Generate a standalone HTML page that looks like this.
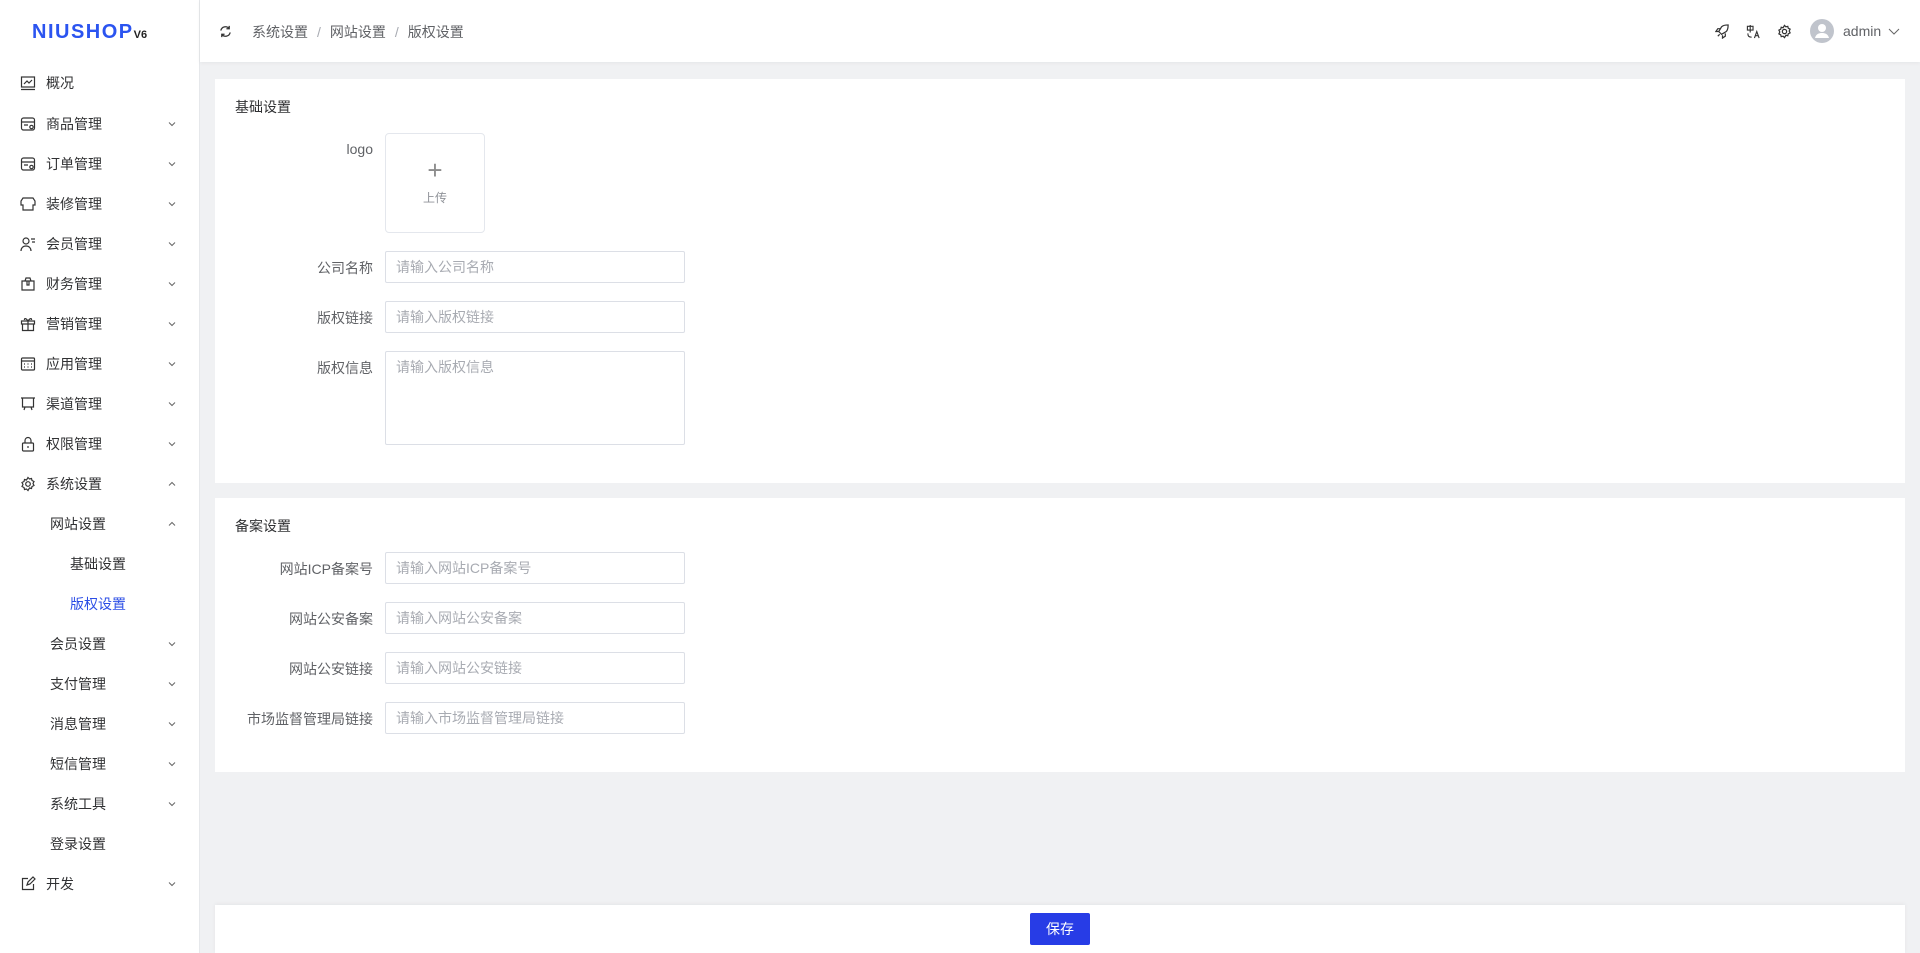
<!DOCTYPE html>
<html><head><meta charset="utf-8"><style>
*{margin:0;padding:0;box-sizing:border-box}
body{width:1920px;height:953px;background:#f0f1f3;font-family:"Liberation Sans","Noto Sans CJK SC",sans-serif;font-size:14px;color:#303133;position:relative;overflow:hidden}
.abs{position:absolute}
#side{left:0;top:0;width:200px;height:953px;background:#fff;border-right:1px solid #e6e8eb}
.logo{left:32px;top:21px;font-family:"Liberation Sans",sans-serif;font-weight:bold;color:#2b54f0;font-size:20px;letter-spacing:1.5px}
.logo small{font-size:11px;color:#222;margin-left:0;letter-spacing:0}
.mi{position:absolute;left:0;width:200px;height:20px;line-height:20px;font-size:14px;color:#303133}
.mi svg.ic{position:absolute;left:20px;top:2px}
.mi .t{position:absolute;left:46px}
.mi .t2{position:absolute;left:50px}
.mi .t3{position:absolute;left:70px}
.mi .ch{position:absolute;left:167px;top:5px}
#head{left:200px;top:0;width:1720px;height:62px;background:#fff;box-shadow:0 1px 4px rgba(0,0,0,.05)}
.bc{left:252px;top:22px;color:#606266;font-size:14px}
.bc span.s{color:#a8abb2;margin:0 9px}
.card{background:#fff;left:215px;width:1690px}
.title{font-size:14px;color:#303133}
.lab{position:absolute;right:0;width:200px;text-align:right;color:#606266;font-size:14px}
.inp{position:absolute;left:385px;width:300px;height:32px;border:1px solid #dcdfe6;border-radius:2px;padding-left:10px;line-height:30px;color:#a8abb2;font-size:14px;background:#fff}
</style></head><body>
<div id="side" class="abs">
<div class="abs logo">NIUSHOP<small>V6</small></div>
<div class="mi" style="top:73px"><svg class="ic" width="16" height="16" viewBox="0 0 16 16" fill="none" stroke="#333" stroke-width="1.2"><rect x="1.5" y="2" width="13" height="10"/><path d="M1 14.5h14M4 9l3-3 2 2 3-3"/></svg><span class="t">概况</span></div>
<div class="mi" style="top:114px"><svg class="ic" width="16" height="16" viewBox="0 0 16 16" fill="none" stroke="#333" stroke-width="1.2"><rect x="1.5" y="2" width="13" height="12" rx="2"/><path d="M1.5 6h13M4 9h4"/><circle cx="11.5" cy="11" r="1.7"/></svg><span class="t">商品管理</span><svg class="ch" width="10" height="10" viewBox="0 0 10 10" fill="none" stroke="#666"><path d="M2 3.5l3 3 3-3"/></svg></div>
<div class="mi" style="top:154px"><svg class="ic" width="16" height="16" viewBox="0 0 16 16" fill="none" stroke="#333" stroke-width="1.2"><rect x="1.5" y="2" width="13" height="12" rx="2"/><path d="M1.5 6h13M4 9h4"/><circle cx="11.5" cy="11" r="1.7"/></svg><span class="t">订单管理</span><svg class="ch" width="10" height="10" viewBox="0 0 10 10" fill="none" stroke="#666"><path d="M2 3.5l3 3 3-3"/></svg></div>
<div class="mi" style="top:194px"><svg class="ic" width="16" height="16" viewBox="0 0 16 16" fill="none" stroke="#333" stroke-width="1.2"><path d="M3 2h10l2 3v4h-2v5H3V9H1V5z"/></svg><span class="t">装修管理</span><svg class="ch" width="10" height="10" viewBox="0 0 10 10" fill="none" stroke="#666"><path d="M2 3.5l3 3 3-3"/></svg></div>
<div class="mi" style="top:234px"><svg class="ic" width="16" height="16" viewBox="0 0 16 16" fill="none" stroke="#333" stroke-width="1.2"><circle cx="6" cy="5" r="3"/><path d="M1 15c0-3 2-5 5-5s5 2 5 5M11 3h4M12 6h3"/></svg><span class="t">会员管理</span><svg class="ch" width="10" height="10" viewBox="0 0 10 10" fill="none" stroke="#666"><path d="M2 3.5l3 3 3-3"/></svg></div>
<div class="mi" style="top:274px"><svg class="ic" width="16" height="16" viewBox="0 0 16 16" fill="none" stroke="#333" stroke-width="1.2"><path d="M2 5h12v9H2zM5 5l1-3h4l1 3M7 5v4h2V5"/></svg><span class="t">财务管理</span><svg class="ch" width="10" height="10" viewBox="0 0 10 10" fill="none" stroke="#666"><path d="M2 3.5l3 3 3-3"/></svg></div>
<div class="mi" style="top:314px"><svg class="ic" width="16" height="16" viewBox="0 0 16 16" fill="none" stroke="#333" stroke-width="1.2"><path d="M1.5 5h13v3h-13zM2.5 8v6.5h11V8M8 5v9.5M8 5C6 2 4 2 4.5 4M8 5c2-3 4-3 3.5-1"/></svg><span class="t">营销管理</span><svg class="ch" width="10" height="10" viewBox="0 0 10 10" fill="none" stroke="#666"><path d="M2 3.5l3 3 3-3"/></svg></div>
<div class="mi" style="top:354px"><svg class="ic" width="16" height="16" viewBox="0 0 16 16" fill="none" stroke="#333" stroke-width="1.2"><rect x="1.5" y="2" width="13" height="12" rx="1"/><path d="M1.5 5h13M4 8h1M7.5 8h1M11 8h1M4 11h1M7.5 11h1M11 11h1"/></svg><span class="t">应用管理</span><svg class="ch" width="10" height="10" viewBox="0 0 10 10" fill="none" stroke="#666"><path d="M2 3.5l3 3 3-3"/></svg></div>
<div class="mi" style="top:394px"><svg class="ic" width="16" height="16" viewBox="0 0 16 16" fill="none" stroke="#333" stroke-width="1.2"><path d="M1 2h14M2.5 2v9h11V2M5 11l-1 3M11 11l1 3"/></svg><span class="t">渠道管理</span><svg class="ch" width="10" height="10" viewBox="0 0 10 10" fill="none" stroke="#666"><path d="M2 3.5l3 3 3-3"/></svg></div>
<div class="mi" style="top:434px"><svg class="ic" width="16" height="16" viewBox="0 0 16 16" fill="none" stroke="#333" stroke-width="1.2"><rect x="2.5" y="7" width="11" height="8" rx="1"/><path d="M5 7V4.5a3 3 0 016 0V7M8 10v2"/></svg><span class="t">权限管理</span><svg class="ch" width="10" height="10" viewBox="0 0 10 10" fill="none" stroke="#666"><path d="M2 3.5l3 3 3-3"/></svg></div>
<div class="mi" style="top:474px"><svg class="ic" width="16" height="16" viewBox="0 0 16 16" fill="none" stroke="#333" stroke-width="1.2"><circle cx="8" cy="8" r="2.3"/><path d="M8 1.5l1.5 1.5 2-.5.5 2 2 1-1 2 1 2-2 1-.5 2-2-.5L8 14.5 6.5 13l-2 .5-.5-2-2-1 1-2-1-2 2-1 .5-2 2 .5z"/></svg><span class="t">系统设置</span><svg class="ch" width="10" height="10" viewBox="0 0 10 10" fill="none" stroke="#666"><path d="M2 6.5l3-3 3 3"/></svg></div>
<div class="mi" style="top:514px"><span class="t2">网站设置</span><svg class="ch" width="10" height="10" viewBox="0 0 10 10" fill="none" stroke="#666"><path d="M2 6.5l3-3 3 3"/></svg></div>
<div class="mi" style="top:554px"><span class="t3">基础设置</span></div>
<div class="mi" style="top:594px;color:#2b4de6"><span class="t3">版权设置</span></div>
<div class="mi" style="top:634px"><span class="t2">会员设置</span><svg class="ch" width="10" height="10" viewBox="0 0 10 10" fill="none" stroke="#666"><path d="M2 3.5l3 3 3-3"/></svg></div>
<div class="mi" style="top:674px"><span class="t2">支付管理</span><svg class="ch" width="10" height="10" viewBox="0 0 10 10" fill="none" stroke="#666"><path d="M2 3.5l3 3 3-3"/></svg></div>
<div class="mi" style="top:714px"><span class="t2">消息管理</span><svg class="ch" width="10" height="10" viewBox="0 0 10 10" fill="none" stroke="#666"><path d="M2 3.5l3 3 3-3"/></svg></div>
<div class="mi" style="top:754px"><span class="t2">短信管理</span><svg class="ch" width="10" height="10" viewBox="0 0 10 10" fill="none" stroke="#666"><path d="M2 3.5l3 3 3-3"/></svg></div>
<div class="mi" style="top:794px"><span class="t2">系统工具</span><svg class="ch" width="10" height="10" viewBox="0 0 10 10" fill="none" stroke="#666"><path d="M2 3.5l3 3 3-3"/></svg></div>
<div class="mi" style="top:834px"><span class="t2">登录设置</span></div>
<div class="mi" style="top:874px"><svg class="ic" width="16" height="16" viewBox="0 0 16 16" fill="none" stroke="#333" stroke-width="1.2"><path d="M8 2.5H2.5v11h11V8M7 9l1-3 5-5 2 2-5 5z"/></svg><span class="t">开发</span><svg class="ch" width="10" height="10" viewBox="0 0 10 10" fill="none" stroke="#666"><path d="M2 3.5l3 3 3-3"/></svg></div>
</div>
<div id="head" class="abs"></div>
<svg class="abs" style="left:219px;top:25px" width="13" height="13" viewBox="0 0 14 14" fill="none" stroke="#333" stroke-width="1.4"><path d="M2 6a5 5 0 019-2M12 8a5 5 0 01-9 2M11 1v3H8M3 13v-3h3"/></svg>
<div class="abs bc">系统设置<span class="s">/</span>网站设置<span class="s">/</span>版权设置</div>
<svg class="abs" style="left:1715px;top:24px" width="15" height="15" viewBox="0 0 16 16" fill="none" stroke="#333" stroke-width="1.3"><path d="M6 10l-2-2 3-5c2-2 5-2 7-2 0 2 0 5-2 7l-5 3zM4 8l-3 0 2-3h3M8 12v3l3-2v-3M3 13l2-2"/></svg>
<svg class="abs" style="left:1746px;top:24px" width="15" height="15" viewBox="0 0 16 16" fill="none" stroke="#333" stroke-width="1.2"><path d="M1.5 2.5h6v4h-6zM4.5 1v8M2 10c0 3 1 4 4 4M9 15l2.5-7 2.5 7M10 12.5h3"/></svg>
<svg class="abs" style="left:1777px;top:24px" width="15" height="15" viewBox="0 0 16 16" fill="none" stroke="#333" stroke-width="1.3"><circle cx="8" cy="8" r="2.3"/><path d="M8 1.5l1.5 1.5 2-.5.5 2 2 1-1 2 1 2-2 1-.5 2-2-.5L8 14.5 6.5 13l-2 .5-.5-2-2-1 1-2-1-2 2-1 .5-2 2 .5z"/></svg>
<svg class="abs" style="left:1810px;top:19px" width="24" height="24" viewBox="0 0 24 24"><circle cx="12" cy="12" r="12" fill="#c0c4cc"/><circle cx="12" cy="9" r="4" fill="#fff"/><path d="M5 19c1-4 4-5 7-5s6 1 7 5z" fill="#fff"/></svg>
<div class="abs" style="left:1843px;top:23px;color:#606266;font-size:14px">admin</div>
<svg class="abs" style="left:1888px;top:26px" width="12" height="10" viewBox="0 0 12 10" fill="none" stroke="#666"><path d="M1 3l5 5 5-5"/></svg>

<div class="abs card" style="top:79px;height:404px">
<div class="abs title" style="left:20px;top:18px">基础设置</div>
</div>
<div class="lab abs" style="left:0;width:373px;top:141px">logo</div>
<div class="abs" style="left:385px;top:133px;width:100px;height:100px;border:1px solid #e4e7ed;border-radius:4px;background:#fff;text-align:center;color:#909399">
<div style="font-size:26px;line-height:26px;margin-top:23px;font-weight:200;color:#8c8c8c">+</div>
<div style="font-size:12px;margin-top:6px">上传</div></div>
<div class="lab abs" style="left:0;width:373px;top:258px">公司名称</div>
<div class="inp" style="top:251px">请输入公司名称</div>
<div class="lab abs" style="left:0;width:373px;top:308px">版权链接</div>
<div class="inp" style="top:301px">请输入版权链接</div>
<div class="lab abs" style="left:0;width:373px;top:358px">版权信息</div>
<div class="inp" style="top:351px;height:94px;line-height:22px;padding-top:4px">请输入版权信息</div>

<div class="abs card" style="top:498px;height:274px">
<div class="abs title" style="left:20px;top:18px">备案设置</div>
</div>
<div class="lab abs" style="left:0;width:373px;top:559px">网站ICP备案号</div>
<div class="inp" style="top:552px">请输入网站ICP备案号</div>
<div class="lab abs" style="left:0;width:373px;top:609px">网站公安备案</div>
<div class="inp" style="top:602px">请输入网站公安备案</div>
<div class="lab abs" style="left:0;width:373px;top:659px">网站公安链接</div>
<div class="inp" style="top:652px">请输入网站公安链接</div>
<div class="lab abs" style="left:0;width:373px;top:709px">市场监督管理局链接</div>
<div class="inp" style="top:702px">请输入市场监督管理局链接</div>

<div class="abs card" style="top:905px;height:48px;box-shadow:0 -1px 4px rgba(0,0,0,.05)"></div>
<div class="abs" style="left:1030px;top:913px;width:60px;height:32px;background:#273ce6;border-radius:2px;color:#fff;text-align:center;line-height:32px;font-size:14px">保存</div>
</body></html>
